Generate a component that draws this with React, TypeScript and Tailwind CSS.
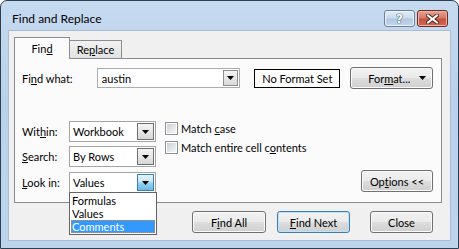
import clsx from "clsx";
import type { ReactNode } from "react";

const cn = clsx;

const btnFace =
  "bg-[linear-gradient(to_bottom,#f2f2f2_0%,#ebebeb_48%,#dddddd_52%,#cfcfcf_100%)]";

function Btn({
  children,
  className,
  primary,
}: {
  children: ReactNode;
  className?: string;
  primary?: boolean;
}) {
  return (
    <div
      className={cn(
        "flex h-[22px] items-center rounded-[3px] border text-black",
        btnFace,
        primary
          ? "border-[#3c7fb1] shadow-[inset_0_0_0_1px_#bfe3f7]"
          : "border-[#707070] shadow-[inset_0_0_0_1px_#fbfbfb]",
        className
      )}
    >
      {children}
    </div>
  );
}

function Arrow() {
  return (
    <svg width="7" height="4" viewBox="0 0 7 4">
      <polygon points="0,0 7,0 3.5,4" fill="#000" />
    </svg>
  );
}

function Select({ value, active }: { value: string; active?: boolean }) {
  return (
    <div className="flex h-[21px] w-[87px] items-stretch border border-[#a5a5a5] bg-white p-[1px]">
      <span className="flex flex-1 items-center pl-[2px]">{value}</span>
      <div
        className={cn(
          "flex w-[17px] items-center justify-center border",
          active
            ? "border-[#3c7fb1] bg-[linear-gradient(to_bottom,#e3f4fc_0%,#c4e5f6_48%,#98d1ef_52%,#6cbbe5_100%)]"
            : "border-[#707070] bg-[linear-gradient(to_bottom,#f4f4f4_0%,#e8e8e8_50%,#d6d6d6_100%)]"
        )}
      >
        <Arrow />
      </div>
    </div>
  );
}

function Check({ children }: { children: ReactNode }) {
  return (
    <div className="flex h-[13px] items-center gap-[3px]">
      <div className="h-[13px] w-[13px] border border-[#8e8f8f] bg-white p-[1px]">
        <div className="h-full w-full bg-[linear-gradient(to_bottom_right,#cbcfd5,#f6f6f6)]" />
      </div>
      <span>{children}</span>
    </div>
  );
}

export default function App() {
  return (
    <div className="h-[249px] w-[459px] bg-white font-['Lato',sans-serif] text-[11px] leading-[13px] text-black">
      <div className="flex h-[249px] w-[459px] flex-col rounded-t-[7px] border border-[#2e3f52] bg-[linear-gradient(to_bottom,#c6daf0_0%,#b9d1ea_40%,#bcd4ec_100%)]">
        {/* title bar */}
        <div className="flex h-[29px] shrink-0 items-center pl-[11px] pr-[10px] pt-[6px]">
          <span className="flex-1 text-[12px] leading-[14px] text-black">Find and Replace</span>
          <div className="flex gap-[2px]">
            <div className="flex h-[17px] w-[31px] items-center justify-center rounded-[3px] border border-[#6c7f98] bg-[linear-gradient(to_bottom,#e2ecf6_0%,#c9dbee_48%,#b1c9e3_52%,#bfd5ec_100%)] shadow-[inset_0_0_0_1px_#eef4fa]">
              <span className="font-['DejaVu_Sans',sans-serif] text-[12px] font-bold leading-none text-white [text-shadow:0_0_1px_#4a5d75,0_0_1px_#4a5d75,0_0_1px_#4a5d75]">
                ?
              </span>
            </div>
            <div className="flex h-[17px] w-[31px] items-center justify-center rounded-[3px] border border-[#6e2a23] bg-[linear-gradient(to_bottom,#e8a493_0%,#d57865_48%,#c4503f_52%,#d26a52_100%)] shadow-[inset_0_0_0_1px_#eeb1a3]">
              <svg width="13" height="10" viewBox="0 0 13 10">
                <path d="M2 1.5 L11 8.5 M11 1.5 L2 8.5" stroke="#4a2320" strokeWidth="4" strokeLinecap="square" />
                <path d="M2 1.5 L11 8.5 M11 1.5 L2 8.5" stroke="#ffffff" strokeWidth="2" strokeLinecap="square" />
              </svg>
            </div>
          </div>
        </div>

        {/* client */}
        <div className="relative mx-[7px] mb-[7px] flex flex-1 flex-col border border-[#a8bdd3] bg-[#f0f0f0] pl-[5px] pr-[8px] pt-[6px]">
          {/* tabs */}
          <div className="relative z-10 flex h-[21px] items-end">
            <div className="-mb-[1px] flex h-[22px] w-[56px] items-center justify-center border border-b-0 border-[#898c95] bg-[#fbfbfb] pb-[1px]">
              Fin<u>d</u>
            </div>
            <div className="flex h-[18px] w-[52px] items-center justify-center border border-b-0 border-l-0 border-[#898c95] bg-[linear-gradient(to_bottom,#f2f2f2,#e3e3e3)]">
              Re<u>p</u>lace
            </div>
          </div>

          {/* panel */}
          <div className="flex h-[145px] flex-col border border-[#898c95] bg-[#fbfbfb] pl-[7px] pr-[8px] pt-[9px]">
            <div className="flex h-[20px] items-center">
              <span className="w-[75px]">
                Fi<u>n</u>d what:
              </span>
              <div className="flex h-[20px] w-[144px] items-stretch border border-[#abadb3] bg-white p-[1px]">
                <span className="flex flex-1 items-center pl-[3px]">austin</span>
                <div className="flex w-[15px] items-center justify-center border border-[#8f8f8f] bg-[linear-gradient(to_bottom,#f4f4f4,#d9d9d9)]">
                  <Arrow />
                </div>
              </div>
              <div className="ml-[14px] flex h-[19px] w-[86px] items-center justify-center border border-black bg-white">
                No Format Set
              </div>
              <Btn className="ml-[10px] h-[19px] w-[83px] pl-[17px] pr-[6px]">
                <span className="flex-1">
                  For<u>m</u>at...
                </span>
                <Arrow />
              </Btn>
            </div>

            <div className="mt-[33px] flex">
              <div className="flex flex-col gap-[4px]">
                <div className="flex items-center">
                  <span className="w-[47px]">
                    Wit<u>h</u>in:
                  </span>
                  <Select value="Workbook" />
                </div>
                <div className="flex items-center">
                  <span className="w-[47px]">
                    <u>S</u>earch:
                  </span>
                  <Select value="By Rows" />
                </div>
                <div className="mt-[1px] flex items-center">
                  <span className="w-[47px]">
                    <u>L</u>ook in:
                  </span>
                  <Select value="Values" active />
                </div>
              </div>
              <div className="ml-[9px] flex flex-col gap-[6px] pt-[1px]">
                <Check>
                  Match <u>c</u>ase
                </Check>
                <Check>
                  Match entire cell c<u>o</u>ntents
                </Check>
              </div>
              <div className="flex flex-1 items-end justify-end">
                <Btn className="mb-[1px] w-[72px] justify-center">
                  Op<u>t</u>ions &lt;&lt;
                </Btn>
              </div>
            </div>
          </div>

          {/* buttons */}
          <div className="mt-[8px] flex justify-end pr-[9px]">
            <Btn className="w-[74px] justify-center">
              F<u>i</u>nd All
            </Btn>
            <Btn primary className="ml-[11px] w-[73px] justify-center">
              <span>
                <u>F</u>ind Next
              </span>
            </Btn>
            <Btn className="ml-[20px] w-[63px] justify-center">Close</Btn>
          </div>

          {/* open list of the Look in select */}
          <div className="absolute left-[60px] top-[161px] z-20 flex w-[88px] flex-col border border-[#646464] bg-white p-[1px]">
            <div className="h-[13px] pl-[1px] leading-[13px]">Formulas</div>
            <div className="h-[13px] pl-[1px] leading-[13px]">Values</div>
            <div className="h-[13px] border border-dotted border-[#d08a3a] bg-[#3399ff] leading-[11px] text-white">
              Comments
            </div>
          </div>
        </div>
      </div>
    </div>
  );
}
